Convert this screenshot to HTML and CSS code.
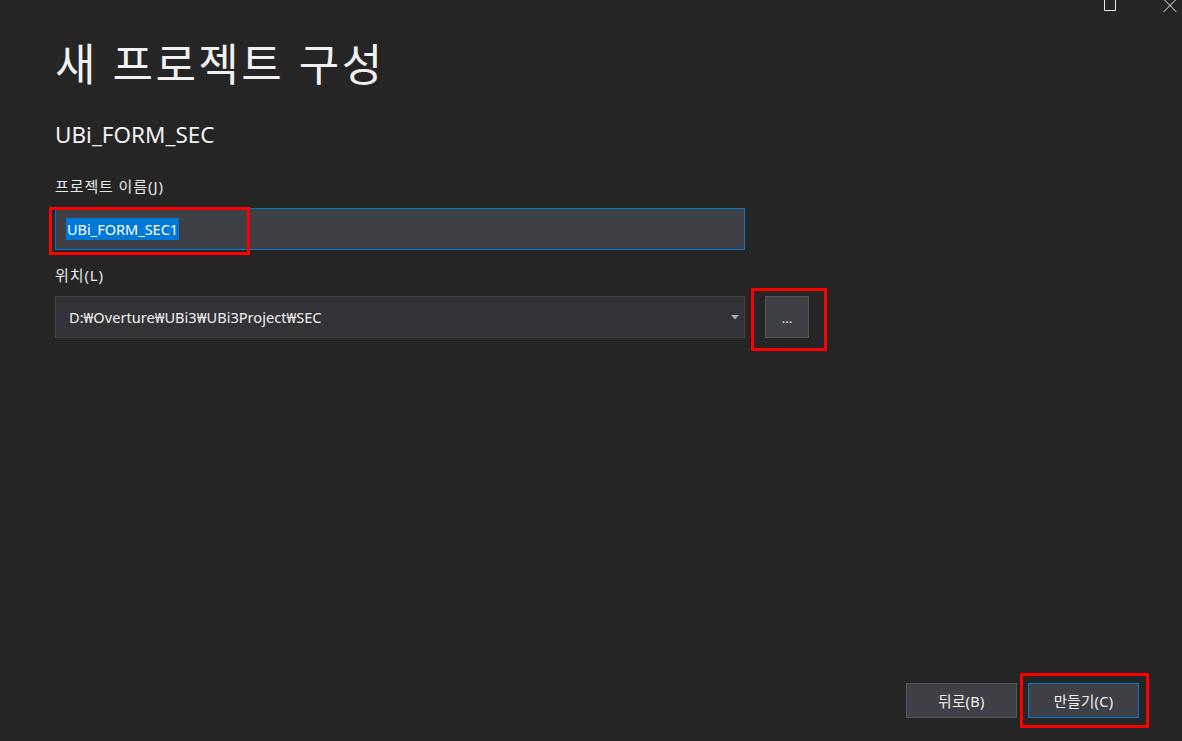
FILE: index.html
```html
<!DOCTYPE html>
<html lang="ko">
<head>
<meta charset="utf-8">
<title>새 프로젝트 구성</title>
<link rel="stylesheet" href="styles.css">
</head>
<body>
<div class="window">
  <div class="titlebar">
    <svg class="ctl ctl-restore" width="14" height="12" viewBox="0 0 14 12"><path d="M1.5 0 V10.5 H12.5 V0" fill="none" stroke="#e6e6e6" stroke-width="1"/></svg>
    <svg class="ctl ctl-close" width="16" height="12" viewBox="0 0 16 12"><path d="M1.5 -1 L14.5 12 M14.5 -1 L1.5 12" fill="none" stroke="#e6e6e6" stroke-width="1"/></svg>
  </div>

  <main class="content">
    <h1 class="title">새 프로젝트 구성</h1>
    <h2 class="subtitle">UBi_FORM_SEC</h2>

    <div class="field field-name">
      <label class="label">프로젝트 이름(J)</label>
      <div class="mark-host">
        <div class="text-input"><span class="selected">UBi_FORM_SEC1</span></div>
        <div class="mark mark-name"></div>
      </div>
    </div>

    <div class="field field-location">
      <label class="label">위치(L)</label>
      <div class="location-row">
        <div class="select">
          <span class="select-value">D:₩Overture₩UBi3₩UBi3Project₩SEC</span>
          <svg class="select-arrow" width="8" height="5" viewBox="0 0 8 5"><path d="M0 0 H8 L4 4.5 Z" fill="#a8a8a8"/></svg>
        </div>
        <div class="mark-host">
          <button class="btn btn-browse">...</button>
          <div class="mark mark-browse"></div>
        </div>
      </div>
    </div>
  </main>

  <footer class="actions">
    <button class="btn btn-action">뒤로(B)</button>
    <div class="mark-host">
      <button class="btn btn-action btn-primary">만들기(C)</button>
      <div class="mark mark-create"></div>
    </div>
  </footer>
</div>
</body>
</html>
```

FILE: styles.css
```css
* {
  box-sizing: border-box;
}

html, body {
  margin: 0;
  padding: 0;
  background: #252526;
}

body {
  font-family: "Noto Sans", "Noto Sans CJK KR", sans-serif;
  color: #f1f1f1;
  overflow: hidden;
}

.window {
  width: 1182px;
  height: 741px;
  display: flex;
  flex-direction: column;
  background: #252526;
}

/* window controls, partly cut off by the top edge */
.titlebar {
  height: 12px;
  display: flex;
  justify-content: flex-end;
  align-items: flex-start;
  gap: 45px;
  padding-right: 4px;
}

.ctl {
  display: block;
}

.content {
  padding-left: 55px;
  display: flex;
  flex-direction: column;
}

.title {
  margin: 22px 0 0 0;
  font-family: "Noto Sans CJK KR", sans-serif;
  font-weight: 400;
  font-size: 44px;
  line-height: 56px;
  letter-spacing: 2.4px;
  color: #f1f1f1;
}

.subtitle {
  margin: 30px 0 0 0;
  font-weight: 400;
  font-size: 22.5px;
  line-height: 30px;
  color: #f1f1f1;
}

.field {
  display: flex;
  flex-direction: column;
}

.label {
  font-size: 15px;
  line-height: 20px;
  letter-spacing: 0.9px;
  color: #e8e8e8;
}

.field-name {
  margin-top: 26px;
}

.field-name .label {
  margin-bottom: 12px;
}

.field-location {
  margin-top: 15px;
}

.field-location .label {
  margin-bottom: 11px;
}

.mark-host {
  position: relative;
}

/* red highlight frames drawn over the controls */
.mark {
  position: absolute;
  border: 3px solid #ff0000;
  pointer-events: none;
}

.mark-name {
  left: -6px;
  top: -1px;
  width: 201px;
  height: 48px;
}

.mark-browse {
  left: -14px;
  top: -8px;
  width: 76px;
  height: 63px;
}

.mark-create {
  left: -8px;
  top: -10px;
  width: 129px;
  height: 55px;
}

.text-input {
  width: 690px;
  height: 42px;
  background: #3f3f46;
  border: 1px solid #0078d4;
  display: flex;
  align-items: center;
  padding-left: 10px;
}

.selected {
  background: #0078d7;
  color: #ffffff;
  font-size: 14.5px;
  line-height: 22px;
  padding: 0 1px;
}

.location-row {
  display: flex;
  align-items: flex-start;
  gap: 20px;
}

.select {
  width: 690px;
  height: 42px;
  background: #333337;
  border: 1px solid #434346;
  display: flex;
  align-items: center;
  justify-content: space-between;
  padding: 0 5px 0 13px;
}

.select-value {
  font-size: 14.6px;
  color: #f1f1f1;
}

.select-arrow {
  display: block;
  margin-top: 1px;
}

.btn {
  font-family: "Noto Sans", "Noto Sans CJK KR", sans-serif;
  color: #f1f1f1;
  background: #3f3f46;
  border: 1px solid #555555;
  margin: 0;
  padding: 0;
  cursor: default;
}

.btn-browse {
  display: block;
  width: 44px;
  height: 42px;
  font-size: 13px;
  line-height: 1;
  padding-top: 2px;
}

.actions {
  margin-top: auto;
  display: flex;
  justify-content: flex-end;
  align-items: flex-start;
  gap: 11px;
  padding: 0 43px 23px 0;
}

.btn-action {
  display: block;
  width: 111px;
  height: 35px;
  font-size: 14.5px;
  letter-spacing: 0.3px;
}

.btn-primary {
  border-color: #0078d4;
}
```
